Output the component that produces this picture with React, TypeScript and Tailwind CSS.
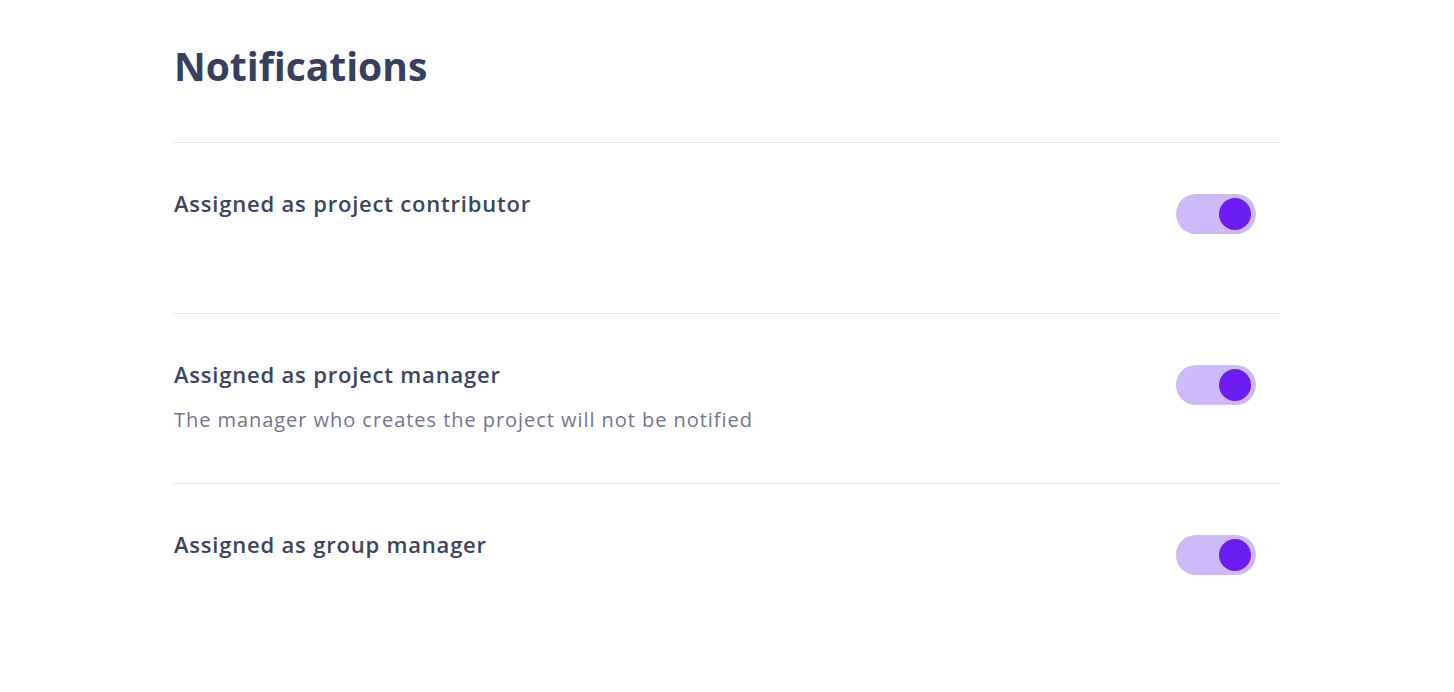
const items = [
  { title: 'Assigned as project contributor' },
  { title: 'Assigned as project manager', hint: 'The manager who creates the project will not be notified' },
  { title: 'Assigned as group manager' },
];

function Toggle() {
  return (
    <button className="w-[80px] h-[40px] rounded-full bg-[#cdbaf9] flex items-center justify-end pr-[5px] shrink-0">
      <span className="w-[32px] h-[32px] rounded-full bg-[#6b1cf0]" />
    </button>
  );
}

export default function App() {
  return (
    <div className="min-h-screen bg-white font-['Open_Sans',sans-serif]">
      <div className="max-w-[1108px] mx-auto pt-[40px]">
        <h1 className="text-[39px] leading-[52px] font-bold text-[#363f5e] pl-[1px]">Notifications</h1>

        <div className="mt-[50px]">
          {items.map(({ title, hint }) => (
            <div key={title} className="h-[170.5px] border-t border-[#e6e6e9] pt-[44px] flex justify-between items-start">
              <div className="pl-[1px]">
                <div className="text-[22px] leading-[32px] font-semibold tracking-[0.8px] text-[#3c4462]">{title}</div>
                {hint && <div className="mt-[16px] text-[20px] leading-[28px] tracking-[0.95px] text-[#71778d]">{hint}</div>}
              </div>
              <div className="mt-[7px] mr-[25px]">
                <Toggle />
              </div>
            </div>
          ))}
        </div>
      </div>
    </div>
  );
}
